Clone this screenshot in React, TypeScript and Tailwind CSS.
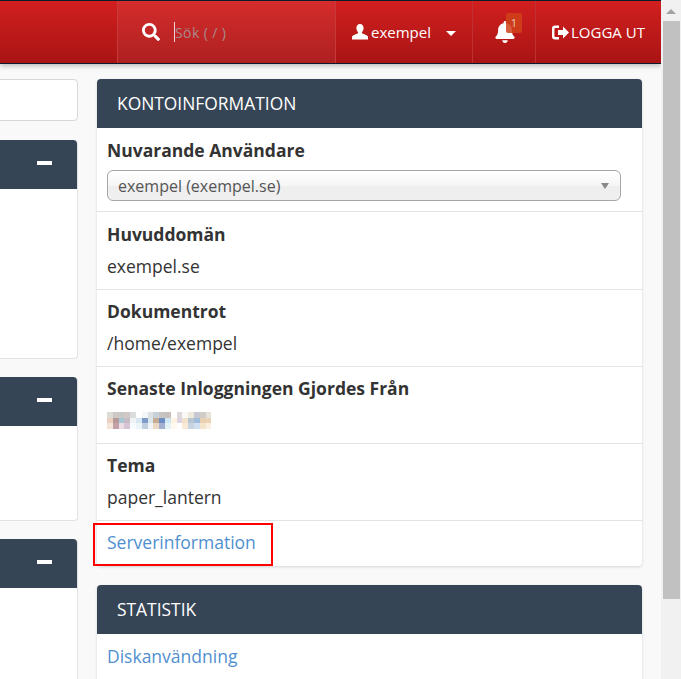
import { FaBell, FaSearch } from "react-icons/fa";

const blurPixels = [
  "#dcdcd6 #cfc8c4 #c8c8c8 #d0c8c4 #dcdcdc #ffffff #f4f6f8 #dde0e4 #c8d0d8 #c8c4c0 #c8c0bc #ffffff #dcd8dc #f8f8f4 #ece8dc #c8c8d0 #d0ccc8 #e8e4dc",
  "#ead0c0 #b89a9a #a8c8d4 #c8bcc4 #eef4f6 #d8e8f2 #7f9cc8 #dce6ee #c4ac94 #6f8fc4 #cfe8f4 #fff3e2 #dcd4e0 #f2e2cc #b8c4d0 #9fbcd8 #e8d0b0 #ead4b8",
  "#f6e4d6 #c4a0a8 #ecdde4 #d4c4d4 #f8fbfd #eef5f9 #c0cee0 #f1f4f6 #ead8c4 #a4b0d0 #e4f2f8 #fff9f0 #ffffff #f8ead6 #c8d4e2 #cfe0f2 #f4e4cc #fbf0e2",
];

function Spacer({ className }: { className: string }) {
  return <div className={className} />;
}

function DarkHeader({ title, collapse }: { title?: string; collapse?: boolean }) {
  return (
    <div className="flex h-[49px] items-center justify-between rounded-t-[4px] bg-[#364556] px-5 text-[17.4px] leading-[24px] text-white">
      <span className="mt-[-1px]">{title}</span>
      {collapse && <span className="mb-[4px] mr-[5px] h-[4px] w-[15px] bg-white" />}
    </div>
  );
}

function InfoRow({ label, value, height = "h-[77px]", top = "pt-[9px]" }: { label: string; value: string; height?: string; top?: string }) {
  return (
    <div className={`${height} ${top} border-b border-[#e3e3e3] px-[10px]`}>
      <div className="text-[17.5px] leading-[24px] font-bold text-[#333]">{label}</div>
      <div className="mt-[8px] text-[17.5px] leading-[24px] text-[#333]">{value}</div>
    </div>
  );
}

function SideCard({ bodyHeight }: { bodyHeight: string }) {
  return (
    <div className="-ml-5 shrink-0 rounded-[4px] border border-t-0 border-[#e2e2e2] bg-white">
      <DarkHeader collapse />
      <div className={bodyHeight} />
    </div>
  );
}

export default function App() {
  return (
    <div className="flex h-[679px] w-[681px] overflow-hidden bg-[#f9f9f9] font-['Open_Sans',sans-serif]">
      <div className="flex w-[661px] flex-col">
        {/* Top bar */}
        <header className="flex h-[64px] shrink-0 border-y border-[#0d1a2b] bg-gradient-to-b from-[#d21f1f] to-[#a91414] text-white shadow-[0_2px_5px_rgba(0,0,0,0.25)]">
          <div className="w-[117px] shrink-0" />
          <div className="flex w-[219px] items-center border-x border-[#c83a3a] bg-gradient-to-b from-[#d52c2c] to-[#ae2020] pl-[24px]">
            <FaSearch className="text-[18px]" />
            <span className="ml-[14px] h-[20px] w-px bg-white/80" />
            <span className="text-[14px] tracking-[0.4px] text-[#a98a8a]">Sök ( / )</span>
          </div>
          <div className="flex w-[137px] items-center border-r border-[#c03030] pl-[16px]">
            <svg width="16" height="16" viewBox="0 0 16 16" fill="#fff">
              <path d="M8 0c2.400 0 3.600 1.800 3.600 4 0 2-1 3.500-1.600 4.300v1l4.500 2c1 .5 1.500 1 1.500 2V15.500H0v-2.200c0-1 .5-1.500 1.500-2L6 9.300v-1C5.400 7.500 4.400 6 4.400 4 4.400 1.800 5.600 0 8 0z" />
            </svg>
            <span className="ml-[3px] text-[15px]">exempel</span>
            <span className="ml-[15px] mt-[3px] h-0 w-0 border-x-[5px] border-t-[5px] border-x-transparent border-t-white" />
          </div>
          <div className="relative flex w-[63px] items-center border-r border-[#c03030] pl-[21px]">
            <FaBell className="text-[22px]" />
            <span className="absolute left-[33px] top-[12px] flex h-[20px] w-[16px] items-center justify-center rounded-[2px] bg-[#d0421a]/85 text-[11px] text-[#e8cbb8]">
              1
            </span>
          </div>
          <div className="flex flex-1 items-center gap-[2px] pl-[16px]">
            <svg width="17" height="15" viewBox="0 0 17 15" fill="#fff">
              <path d="M0 3.500A3 3 0 0 1 3 .5h4v2.400H3.400a1 1 0 0 0-1 1v7.200a1 1 0 0 0 1 1H7v2.400H3a3 3 0 0 1-3-3z" />
              <path d="M6 5h5V1.500L17 7.500 11 13.500V10H6z" />
            </svg>
            <span className="text-[15px]">LOGGA UT</span>
          </div>
        </header>

        <div className="flex min-h-0 flex-1 gap-[19px] pt-[15px]">
          {/* Left column, cut off by the window */}
          <div className="flex w-[78px] shrink-0 flex-col">
            <div className="-ml-5 h-[42px] shrink-0 rounded-[4px] border border-[#d8d8d8] bg-white" />
            <Spacer className="h-[19px] shrink-0" />
            <SideCard bodyHeight="h-[169px]" />
            <Spacer className="h-[18px] shrink-0" />
            <SideCard bodyHeight="h-[94px]" />
            <Spacer className="h-[18px] shrink-0" />
            <SideCard bodyHeight="h-[120px]" />
          </div>

          {/* Right column */}
          <div className="flex w-[545px] shrink-0 flex-col">
            <section className="relative rounded-[4px] bg-white shadow-[0_1px_3px_rgba(0,0,0,0.15)]">
              <DarkHeader title="KONTOINFORMATION" />
              <div className="h-[84px] border-b border-[#e3e3e3] px-[10px] pt-[10px]">
                <div className="text-[17.5px] leading-[24px] font-bold text-[#333]">Nuvarande Användare</div>
                <div className="mt-[8px] flex h-[31px] w-[514px] items-center justify-between rounded-[6px] border border-[#a6a6a6] bg-[linear-gradient(to_bottom,#ffffff_0%,#f6f6f6_50%,#eeeeee_52%,#f0f0f0_100%)] pl-[10px] pr-[11px] text-[16px] text-[#555]">
                  <span>exempel (exempel.se)</span>
                  <span className="h-0 w-0 border-x-[4px] border-t-[6px] border-x-transparent border-t-[#888]" />
                </div>
              </div>
              <InfoRow label="Huvuddomän" value="exempel.se" height="h-[78px]" top="pt-[10px]" />
              <InfoRow label="Dokumentrot" value="/home/exempel" />
              <div className="h-[77px] border-b border-[#e3e3e3] px-[10px] pt-[9px]">
                <div className="text-[17.5px] leading-[24px] font-bold text-[#333]">Senaste Inloggningen Gjordes Från</div>
                <div className="mt-[12px] flex flex-col">
                  {blurPixels.map((row, y) => (
                    <div key={y} className="flex">
                      {row.split(" ").map((c, x) => (
                        <span key={x} className="h-[5.500px] w-[5.800px]" style={{ backgroundColor: c }} />
                      ))}
                    </div>
                  ))}
                </div>
              </div>
              <InfoRow label="Tema" value="paper_lantern" />
              <div className="flex h-[45px] items-center px-[10px] pb-[3px] text-[17.5px] text-[#4f8fd0]">Serverinformation</div>
              {/* Annotation box */}
              <div className="absolute left-[-4px] top-[444px] h-[43px] w-[180px] border-2 border-[#ff0000]" />
            </section>

            <Spacer className="h-[19px] shrink-0" />

            <section className="rounded-t-[4px] bg-white shadow-[0_1px_3px_rgba(0,0,0,0.15)]">
              <DarkHeader title="STATISTIK" />
              <div className="px-[10px] pt-[10px] text-[17.5px] leading-[24px] text-[#4f8fd0]">Diskanvändning</div>
              <div className="h-[40px]" />
            </section>
          </div>
        </div>
      </div>

      {/* Scrollbar */}
      <div className="flex w-[20px] shrink-0 flex-col items-center bg-[#f1f1f1] pt-[1px]">
        <div className="flex h-[20px] items-center">
          <span className="h-0 w-0 border-x-[5px] border-b-[5px] border-x-transparent border-b-[#a3a3a3]" />
        </div>
        <div className="h-[578px] w-[17px] bg-[#c1c1c1]" />
      </div>
    </div>
  );
}
